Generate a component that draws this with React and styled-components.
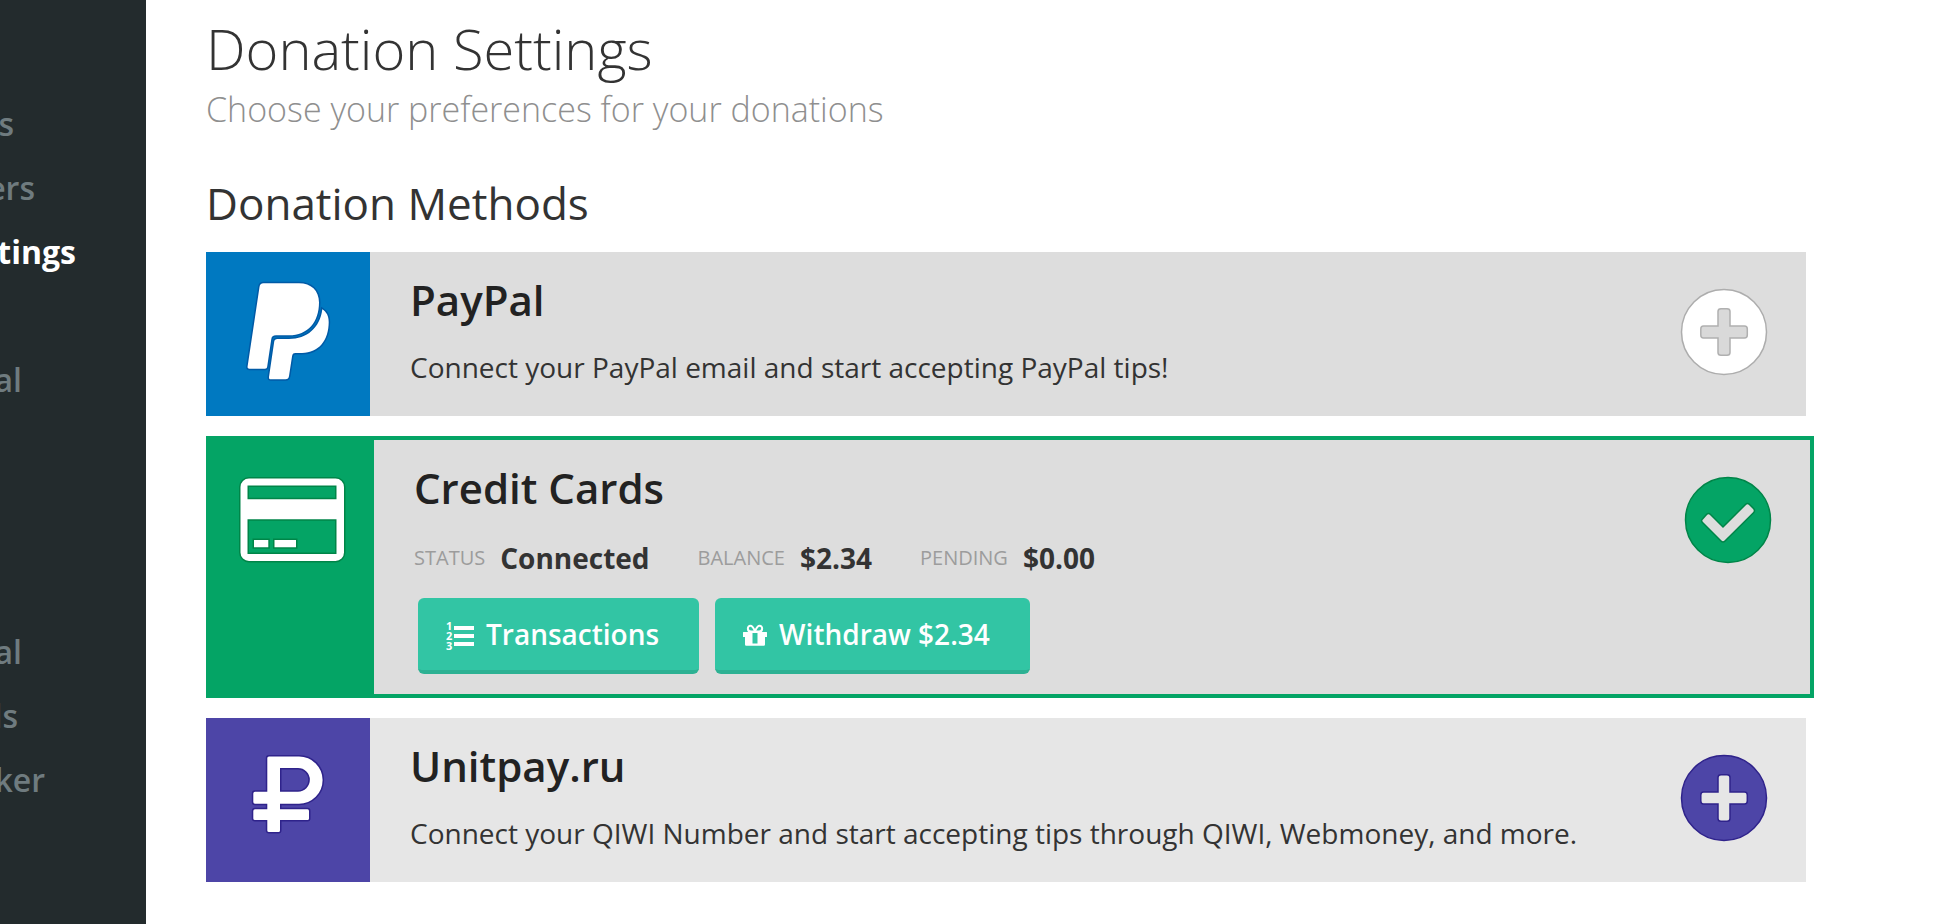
import React from 'react'
import styled, { createGlobalStyle } from 'styled-components'

const GlobalStyle = createGlobalStyle`
    * {
        box-sizing: border-box;
    }
    body {
        margin: 0;
        background: #ffffff;
        color: #333333;
        font-family: "Open Sans", "Noto Sans", sans-serif;
    }
`
const Container = styled.div`
    display: flex;
    min-height: 100vh;
`
const Sidebar = styled.nav`
    flex: 0 0 146px;
    padding-top: 92px;
    background-color: #232b2d;
    overflow: hidden;
`
const NavGroup = styled.div`
    margin-bottom: ${(p) => p.$gap}px;
`
const NavItem = styled.a`
    display: flex;
    justify-content: flex-end;
    width: ${(p) => p.$end}px;
    overflow: hidden;
    font-size: 32px;
    line-height: 64px;
    font-weight: ${(p) => (p.$active ? 700 : 600)};
    color: ${(p) => (p.$active ? '#ffffff' : '#6f7b7f')};
    text-decoration: none;
`
const Main = styled.main`
    flex: 1;
    min-width: 0;
    padding: 10px 152px 40px 60px;
`
const Title = styled.h1`
    margin: 0;
    font-size: 56px;
    line-height: 76px;
    font-weight: 300;
`
const SubTitle = styled.p`
    margin: 0 0 44px;
    font-size: 34px;
    line-height: 46px;
    font-weight: 300;
    color: #8f8f8f;
`
const SectionTitle = styled.h2`
    margin: 0 0 22px;
    font-size: 44px;
    line-height: 54px;
    font-weight: 400;
`
const Methods = styled.div`
    display: flex;
    flex-direction: column;
    gap: 20px;
`
const Method = styled.section`
    box-sizing: content-box;
    width: 100%;
    display: flex;
    background-color: ${(p) => p.$bg || '#dddddd'};
    border: ${(p) => (p.$connected ? '4px solid #04a465' : 'none')};
`
const Tile = styled.div`
    flex: 0 0 164px;
    min-height: 164px;
    background-color: ${(p) => p.$color};
    svg {
        display: block;
    }
`
const Body = styled.div`
    flex: 1;
    padding: 20px 0 20px 40px;
`
const Name = styled.h3`
    margin: 0;
    font-size: 42px;
    line-height: 56px;
    font-weight: 600;
    color: #222222;
`
const Desc = styled.p`
    margin: 19px 0 0;
    font-size: 28px;
    line-height: 40px;
`
const Stats = styled.dl`
    display: flex;
    gap: 48px;
    margin: 22px 0 20px;
`
const Stat = styled.div`
    display: flex;
    align-items: center;
    gap: 15px;
    line-height: 40px;
    dt {
        font-size: 20px;
        color: #9c9c9c;
        text-transform: uppercase;
    }
    dd {
        margin: 0;
        font-size: 28px;
        font-weight: 700;
    }
`
const Actions = styled.div`
    display: flex;
    gap: 16px;
    padding-left: 4px;
`
const Button = styled.button`
    display: flex;
    align-items: center;
    gap: 12px;
    height: 76px;
    padding: 0 40px 0 28px;
    border: none;
    border-bottom: 4px solid #2db193;
    border-radius: 6px;
    background-color: #32c5a4;
    color: #ffffff;
    font-family: inherit;
    font-size: 28px;
    font-weight: 600;
    cursor: pointer;
`
const Toggle = styled.button`
    flex: none;
    align-self: flex-start;
    margin: 36px 38px 0 0;
    padding: 0;
    border: none;
    border-radius: 50%;
    background: none;
    cursor: pointer;
    svg {
        display: block;
    }
`

const PayPalIcon = () => (
    <svg width="164" height="164" viewBox="0 0 164 164" fill="#fff" stroke="#005aa6" strokeWidth="3" paintOrder="stroke" aria-hidden="true">
        <path d="M57.500 31.300H93C105 31.300 113 38.500 113 50.500C113 70 102 83.300 83 83.300H70C67 83.300 65.700 84.500 65.300 87L61.200 114.500C61 116 60.300 116.700 59 116.700H43.500C42 116.700 41.400 116 41.600 114.500L53.500 35C53.900 32.500 55 31.300 57.500 31.300Z" />
        <path d="M116.300 57.300C120.500 60 122.700 64 122.700 70C122.700 88 113 100.900 96 100.900H89.500C87 100.900 86.400 102 86 104.500L83 124C82.600 126.300 81.800 127.300 79.500 127.300H65C63.300 127.300 62.800 126.500 63 125L68.200 89.800C68.500 87.800 69.500 87 71.500 87H83C101 87 114 76 116.300 57.300Z" />
    </svg>
)
const CardIcon = () => (
    <svg width="164" height="164" viewBox="0 0 164 164" fill="#fff" stroke="#008548" strokeWidth="3" paintOrder="stroke" fillRule="evenodd" aria-hidden="true">
        <path d="M39 38.500H125.500A8.500 8.500 0 0 1 134 47V112.500A8.500 8.500 0 0 1 125.500 121H39A8.500 8.500 0 0 1 30.500 112.500V47A8.500 8.500 0 0 1 39 38.500ZM37.500 45.500V59.200H126.500V45.500ZM37.500 79.300V114H126.500V79.300Z" />
        <path d="M44 100H58.300V107.300H44ZM64.500 100H86V107.300H64.500Z" />
    </svg>
)
const RubleIcon = () => (
    <svg width="164" height="164" viewBox="0 0 164 164" fill="#fff" stroke="#2f238b" strokeWidth="3" strokeLinejoin="round" paintOrder="stroke" fillRule="evenodd" aria-hidden="true">
        <path d="M63 38.500H93A23.500 23.500 0 0 1 93 85.700H74V91.300H101.500Q103 91.300 103 93V100.500Q103 102 101.500 102H74V112.500Q74 114 72.500 114H63Q61.300 114 61.300 112.500V102H49Q47.300 102 47.300 100.500V93Q47.300 91.300 49 91.300H61.300V85.700H49Q47.300 85.700 47.300 84V75.500Q47.300 73.700 49 73.700H61.300V40Q61.300 38.500 63 38.500ZM74 50V73.700H92A11.800 11.800 0 0 0 92 50Z" />
    </svg>
)
const PlusCircle = ({ fill, edge, inner, innerEdge }) => (
    <svg width="88" height="88" viewBox="0 0 88 88" aria-hidden="true">
        <circle cx="44" cy="44" r="42.500" fill={fill} stroke={edge} strokeWidth="1.500" />
        <path d="M41 20.800H47Q50 20.800 50 23.500V38H64.500Q67.300 38 67.300 41V47Q67.300 50 64.500 50H50V64.500Q50 67.300 47 67.300H41Q38 67.300 38 64.500V50H23.500Q20.800 50 20.800 47V41Q20.800 38 23.500 38H38V23.500Q38 20.800 41 20.800Z" fill={inner} stroke={innerEdge} strokeWidth="1.500" />
    </svg>
)
const CheckCircle = () => (
    <svg width="88" height="88" viewBox="0 0 88 88" aria-hidden="true">
        <circle cx="44" cy="44" r="42.500" fill="#04a465" stroke="#008548" strokeWidth="1.500" />
        <path d="M18.500 43L22.500 38.500Q24.500 36.500 26.500 38.500L39 51L61.500 28.500Q63.500 26.500 65.500 28.500L69.500 32.500Q71.500 34.700 69.500 36.700L41 65Q39 67 37 65L18.500 46.500Q16.700 44.700 18.500 43Z" fill="#dddddd" stroke="#008548" strokeWidth="1.500" />
    </svg>
)
const ListIcon = () => (
    <svg width="28" height="32" viewBox="0 0 28 32" fill="#fff" fontFamily="Open Sans" fontSize="11" fontWeight="700" aria-hidden="true">
        <text x="0" y="12">1</text>
        <text x="0" y="22">2</text>
        <text x="0" y="32">3</text>
        <path d="M8 8H28V12H8ZM8 16H28V20H8ZM8 24H28V28H8Z" />
    </svg>
)
const GiftIcon = () => (
    <svg width="24" height="24" viewBox="0 0 24 24" fill="#fff" aria-hidden="true">
        <path fillRule="evenodd" d="M0 10.500Q0 10 .5 10H23.500Q24 10 24 10.500V15H22V22.500Q22 23.700 20.800 23.700H3.200Q2 23.700 2 22.500V15H0ZM9.500 11V21.500H14.500V11Z" />
        <path d="M11.500 9.500H8C3.800 9.500 4 3.700 7.500 3.700C9.500 3.700 10.500 6 12 9C13.500 6 14.500 3.700 16.500 3.700C20 3.700 20.200 9.500 16 9.500H12.500" fill="none" stroke="#fff" strokeWidth="2" />
    </svg>
)

const navGroups = [
    { gap: 64, items: [{ text: 's', end: 14 }, { text: 'ers', end: 35 }, { text: 'tings', end: 76, active: true }] },
    { gap: 208, items: [{ text: 'al', end: 22 }] },
    { gap: 0, items: [{ text: 'al', end: 22 }, { text: 'ls', end: 18 }, { text: 'ker', end: 45 }] },
]
const stats = [
    { label: 'Status', value: 'Connected' },
    { label: 'Balance', value: '$2.34' },
    { label: 'Pending', value: '$0.00' },
]

const App = () => {
    return (
        <Container>
            <GlobalStyle />
            <Sidebar>
                {navGroups.map((group, i) => (
                    <NavGroup key={i} $gap={group.gap}>
                        {group.items.map((item) => (
                            <NavItem key={item.text} href="#" $end={item.end} $active={item.active}>{item.text}</NavItem>
                        ))}
                    </NavGroup>
                ))}
            </Sidebar>
            <Main>
                <Title>Donation Settings</Title>
                <SubTitle>Choose your preferences for your donations</SubTitle>
                <SectionTitle>Donation Methods</SectionTitle>
                <Methods>
                    <Method>
                        <Tile $color="#0079c1"><PayPalIcon /></Tile>
                        <Body>
                            <Name>PayPal</Name>
                            <Desc>Connect your PayPal email and start accepting PayPal tips!</Desc>
                        </Body>
                        <Toggle aria-label="Connect PayPal">
                            <PlusCircle fill="#ffffff" edge="#adadad" inner="#d9d9d9" innerEdge="#b0b0b0" />
                        </Toggle>
                    </Method>
                    <Method $connected>
                        <Tile $color="#04a465"><CardIcon /></Tile>
                        <Body>
                            <Name>Credit Cards</Name>
                            <Stats>
                                {stats.map((item) => (
                                    <Stat key={item.label}>
                                        <dt>{item.label}</dt>
                                        <dd>{item.value}</dd>
                                    </Stat>
                                ))}
                            </Stats>
                            <Actions>
                                <Button><ListIcon />Transactions</Button>
                                <Button><GiftIcon />Withdraw $2.34</Button>
                            </Actions>
                        </Body>
                        <Toggle aria-label="Credit cards connected">
                            <CheckCircle />
                        </Toggle>
                    </Method>
                    <Method $bg="#e6e6e6">
                        <Tile $color="#4d45a7"><RubleIcon /></Tile>
                        <Body>
                            <Name>Unitpay.ru</Name>
                            <Desc>Connect your QIWI Number and start accepting tips through QIWI, Webmoney, and more.</Desc>
                        </Body>
                        <Toggle aria-label="Connect Unitpay.ru">
                            <PlusCircle fill="#4d45a7" edge="#2f238b" inner="#e6e6e6" innerEdge="#2f238b" />
                        </Toggle>
                    </Method>
                </Methods>
            </Main>
        </Container>
    )
}

export default App
